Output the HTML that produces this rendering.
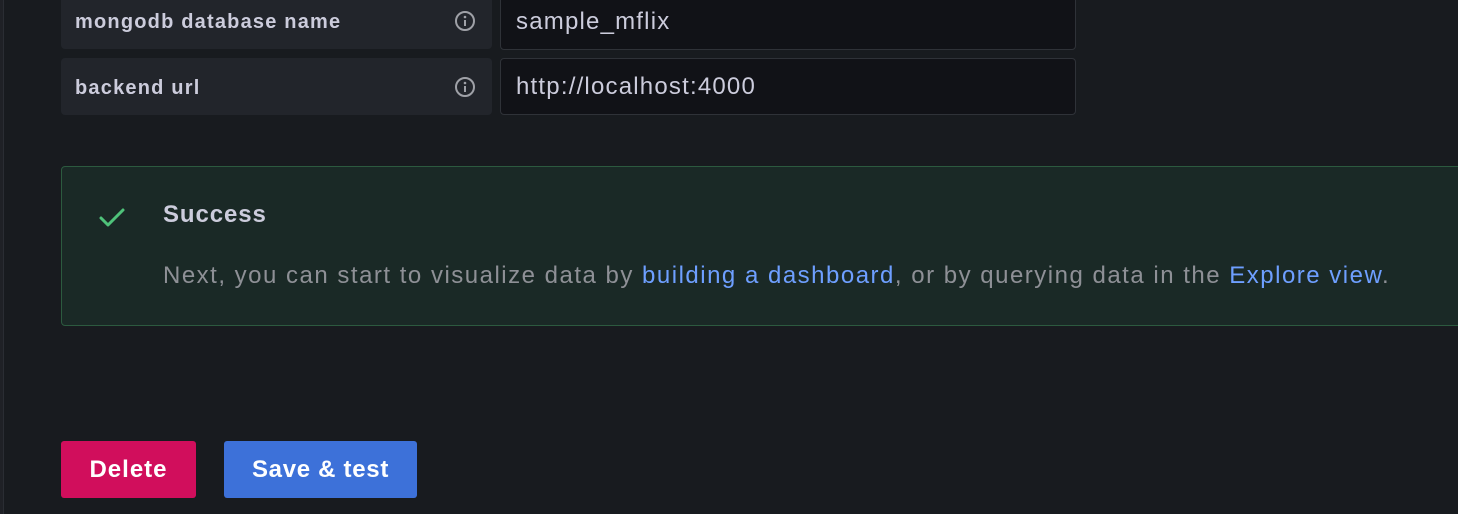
<!DOCTYPE html>
<html><head><style>
html,body{margin:0;padding:0;width:1458px;height:514px;overflow:hidden;background:#181b1f;font-family:"Liberation Sans",sans-serif;}
.edge{position:absolute;left:0;top:0;width:3px;height:514px;background:#1f2126;border-right:1px solid #2a2d33;}
.lab{position:absolute;left:61px;width:431px;background:#22252b;border-radius:4px;color:#ccccdc;font-size:20px;font-weight:bold;letter-spacing:1.2px;box-sizing:border-box;padding-left:14px;padding-top:3px;display:flex;align-items:center;}
.lab svg{position:absolute;right:16px;top:50%;margin-top:-11px;}
.inp{position:absolute;left:500px;width:576px;background:#111217;border:1px solid #2f3238;border-radius:4px;box-sizing:border-box;color:#ccccdc;font-size:24px;letter-spacing:1.2px;padding-left:15px;display:flex;align-items:center;}
.alert{position:absolute;left:61px;top:166px;width:1410px;height:160px;background:#1a2926;border:1px solid #2c5a3f;border-radius:4px;box-sizing:border-box;}
.title{position:absolute;left:101px;top:34px;color:#ccccdc;font-size:24px;font-weight:bold;letter-spacing:0.9px;}
.body{position:absolute;left:101px;top:95px;color:#8e9096;font-size:24px;letter-spacing:1.5px;white-space:nowrap;}
.body a{color:#6e9fff;text-decoration:none;}
.btn{position:absolute;top:441px;height:57px;border-radius:3px;color:#fff;font-size:24px;font-weight:bold;display:flex;align-items:center;justify-content:center;}
</style></head><body>
<div class="edge"></div>
<div class="lab" style="top:-8px;height:57px;">mongodb database name
<svg width="22" height="22" viewBox="0 0 22 22"><circle cx="11" cy="11" r="9" fill="none" stroke="#9fa1a7" stroke-width="2"/><rect x="10" y="10" width="2" height="6" fill="#9fa1a7"/><circle cx="11" cy="7" r="1.3" fill="#9fa1a7"/></svg></div>
<div class="lab" style="top:58px;height:57px;">backend url
<svg width="22" height="22" viewBox="0 0 22 22"><circle cx="11" cy="11" r="9" fill="none" stroke="#9fa1a7" stroke-width="2"/><rect x="10" y="10" width="2" height="6" fill="#9fa1a7"/><circle cx="11" cy="7" r="1.3" fill="#9fa1a7"/></svg></div>
<div class="inp" style="top:-8px;height:58px;padding-top:2px;">sample_mflix</div>
<div class="inp" style="top:58px;height:57px;">http://localhost:4000</div>
<div class="alert">
<svg style="position:absolute;left:36px;top:40px" width="30" height="22" viewBox="0 0 30 22"><path d="M3 11 L10 18 L25 3" fill="none" stroke="#4fc27a" stroke-width="3" stroke-linecap="round" stroke-linejoin="round"/></svg>
<div class="title">Success</div>
<div class="body">Next, you can start to visualize data by <a>building a dashboard</a>, or by querying data in the <a>Explore view</a>.</div>
</div>
<div class="btn" style="left:61px;width:135px;background:#d10e5c;letter-spacing:1px;">Delete</div>
<div class="btn" style="left:224px;width:193px;background:#3d71d9;letter-spacing:0.7px;">Save &amp; test</div>
</body></html>
